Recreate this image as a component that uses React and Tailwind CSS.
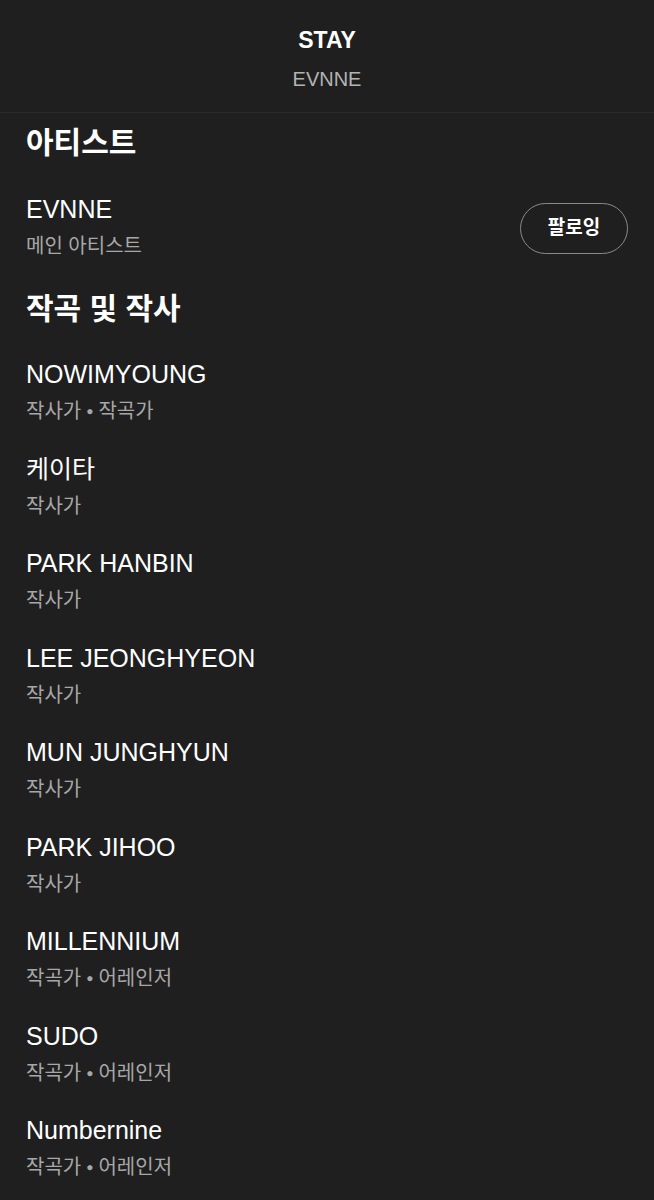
import React from 'react';

const font = { fontFamily: '"Liberation Sans", "Noto Sans CJK KR", sans-serif' };

const credits = [
    { name: 'NOWIMYOUNG', roles: ['작사가', '작곡가'] },
    { name: '케이타', roles: ['작사가'] },
    { name: 'PARK HANBIN', roles: ['작사가'] },
    { name: 'LEE JEONGHYEON', roles: ['작사가'] },
    { name: 'MUN JUNGHYUN', roles: ['작사가'] },
    { name: 'PARK JIHOO', roles: ['작사가'] },
    { name: 'MILLENNIUM', roles: ['작곡가', '어레인저'] },
    { name: 'SUDO', roles: ['작곡가', '어레인저'] },
    { name: 'Numbernine', roles: ['작곡가', '어레인저'] },
];

const Roles = ({ roles }) => (
    <div className="text-[20px] leading-[38px] text-[#a7a7a7] flex items-center">
        {roles.map((r, i) => (
            <React.Fragment key={r}>
                {i > 0 && <span className="text-[12px] mx-[5px]">●</span>}
                <span>{r}</span>
            </React.Fragment>
        ))}
    </div>
);

export default function App() {
    return (
        <div className="w-[654px] h-[1200px] bg-[#1f1f1f] text-white overflow-hidden" style={font}>
            {/* Header */}
            <div className="h-[113px] flex flex-col items-center border-b border-[#2b2b2b] pt-[25px]">
                <div className="text-[23px] leading-[30px] font-bold">STAY</div>
                <div className="text-[20px] leading-[28px] text-[#b3b3b3] mt-[10px]">EVNNE</div>
            </div>

            <div className="px-[26px]">
                <h2 className="text-[30px] leading-[40px] font-bold mt-[10px]">아티스트</h2>

                <div className="flex items-center justify-between mt-[28px]">
                    <div>
                        <div className="text-[25px] leading-[36px]">EVNNE</div>
                        <div className="text-[20px] leading-[38px] text-[#a7a7a7]">메인 아티스트</div>
                    </div>
                    <button className="w-[108px] h-[51px] rounded-full border-[1.5px] border-[#8a8a8a] text-[19px] font-bold text-white">
                        팔로잉
                    </button>
                </div>

                <h2 className="text-[30px] leading-[40px] font-bold mt-[24px]">작곡 및 작사</h2>

                <div className="flex flex-col gap-[20.5px] mt-[27px]">
                    {credits.map((c) => (
                        <div key={c.name}>
                            <div className="text-[25px] leading-[36px]">{c.name}</div>
                            <Roles roles={c.roles} />
                        </div>
                    ))}
                </div>
            </div>
        </div>
    );
}
